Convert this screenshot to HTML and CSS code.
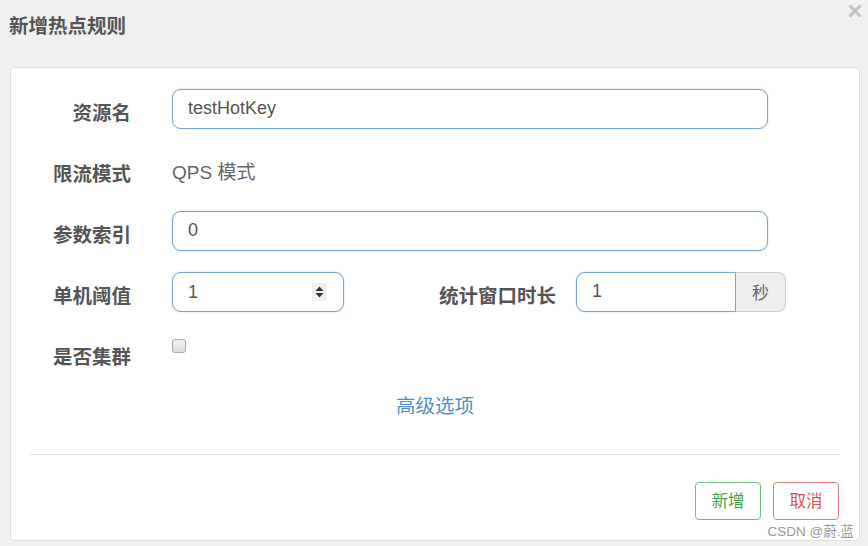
FILE: index.html
```html
<!DOCTYPE html>
<html lang="zh">
<head>
<meta charset="utf-8">
<title>新增热点规则</title>
<link rel="stylesheet" href="styles.css">
</head>
<body>
<div class="dialog">
  <div class="header">
    <div class="title">新增热点规则</div>
    <svg class="close" width="14" height="14" viewBox="0 0 14 14" aria-label="关闭">
      <path d="M1.5 1.5 L12.5 12.5 M12.5 1.5 L1.5 12.5" stroke="#c3c3c3" stroke-width="3" stroke-linecap="butt"/>
    </svg>
  </div>
  <div class="panel">
    <div class="form">
      <div class="row">
        <div class="label">资源名</div>
        <div class="input wide">testHotKey</div>
      </div>
      <div class="row">
        <div class="label">限流模式</div>
        <div class="static">QPS 模式</div>
      </div>
      <div class="row">
        <div class="label">参数索引</div>
        <div class="input wide">0</div>
      </div>
      <div class="row">
        <div class="label">单机阈值</div>
        <div class="input narrow">
          <span>1</span>
          <svg class="spin" width="15" height="18" viewBox="0 0 15 18">
            <rect x="0" y="0" width="15" height="18" fill="#efefef"/>
            <path d="M3.5 8 L7.5 3.5 L11.5 8 Z" fill="#333"/>
            <path d="M3.5 10 L7.5 14.5 L11.5 10 Z" fill="#333"/>
          </svg>
        </div>
        <div class="label label2">统计窗口时长</div>
        <div class="group">
          <div class="input gin">1</div>
          <div class="addon">秒</div>
        </div>
      </div>
      <div class="row">
        <div class="label">是否集群</div>
        <div class="check"></div>
      </div>
    </div>
    <div class="advanced">高级选项</div>
    <div class="rule"></div>
    <div class="buttons">
      <div class="btn ok">新增</div>
      <div class="btn cancel">取消</div>
    </div>
    <div class="mark">CSDN @蔚.蓝</div>
  </div>
</div>
</body>
</html>
```

FILE: styles.css
```css
html, body {
  margin: 0;
  padding: 0;
}
body {
  background: #f0f0f0;
  font-family: "Liberation Sans", "Noto Sans CJK SC", sans-serif;
  color: #555;
  width: 868px;
  height: 546px;
  overflow: hidden;
}
.dialog {
  width: 868px;
}
.header {
  height: 67px;
  display: flex;
  justify-content: space-between;
  align-items: flex-start;
  padding: 0 6px 0 9px;
  box-sizing: border-box;
}
.title {
  margin-top: 13px;
  font-size: 19.5px;
  line-height: 24px;
  font-weight: bold;
  color: #555;
  font-family: "Noto Sans CJK SC", sans-serif;
}
.close {
  display: block;
  margin-top: 4px;
}
.panel {
  position: relative;
  margin-left: 10px;
  width: 850px;
  height: 474px;
  box-sizing: border-box;
  background: #fff;
  border: 1px solid #dddddd;
  border-radius: 5px;
  padding: 21px 20px 20px 0;
}
.form {
  display: flex;
  flex-direction: column;
  gap: 21px;
}
.row {
  display: flex;
  align-items: flex-start;
  height: 40px;
}
.label {
  width: 120px;
  flex: none;
  text-align: right;
  font-family: "Noto Sans CJK SC", sans-serif;
  font-weight: bold;
  font-size: 19.5px;
  line-height: 34px;
  padding-top: 6px;
  color: #555;
  margin-right: 41px;
}
.label2 {
  width: 212px;
  margin-right: 20px;
}
.static {
  font-size: 19px;
  line-height: 34px;
  padding-top: 6px;
  color: #666;
}
.static, .input {
  font-family: "Liberation Sans", "Noto Sans CJK SC", sans-serif;
}
.input {
  box-sizing: border-box;
  height: 40px;
  border: 1.5px solid #7ba3cd;
  border-radius: 9px;
  box-shadow: 0 0 2px rgba(102, 150, 210, 0.45);
  padding: 0 15px;
  font-size: 18px;
  line-height: 37px;
  color: #555;
  background: #fff;
}
.wide {
  width: 596px;
}
.narrow {
  width: 172px;
  display: flex;
  align-items: center;
  justify-content: space-between;
  padding-right: 16px;
}
.spin {
  display: block;
}
.group {
  display: flex;
  width: 210px;
}
.gin {
  width: 160px;
  border-radius: 9px 0 0 9px;
}
.addon {
  box-sizing: border-box;
  width: 50px;
  height: 40px;
  background: #eeeeee;
  border: 1px solid #cccccc;
  border-left: none;
  border-radius: 0 8px 8px 0;
  text-align: center;
  line-height: 38px;
  font-size: 17px;
  color: #666;
  font-family: "Noto Sans CJK SC", sans-serif;
}
.check {
  margin-top: 6px;
  width: 14px;
  height: 14px;
  box-sizing: border-box;
  border: 1px solid #aaaaaa;
  border-radius: 3px;
  background: linear-gradient(#f2f2f2, #dcdcdc);
}
.advanced {
  margin-top: 20px;
  text-align: center;
  padding-left: 20px;
  font-family: "Noto Sans CJK SC", sans-serif;
  font-size: 19.5px;
  line-height: 24px;
  color: #4d90cb;
}
.rule {
  margin: 37px 0 0 19px;
  height: 1px;
  background: #e5e5e5;
}
.buttons {
  margin-top: 27px;
  display: flex;
  justify-content: flex-end;
  gap: 12px;
}
.btn {
  box-sizing: border-box;
  width: 66px;
  height: 38px;
  border-radius: 4px;
  border: 1.5px solid;
  text-align: center;
  font-family: "Noto Sans CJK SC", sans-serif;
  font-size: 16.5px;
  line-height: 35px;
  background: #fff;
}
.ok {
  border-color: #6fbf7a;
  color: #3ea64a;
}
.cancel {
  border-color: #de7e7b;
  color: #d9534f;
}
.mark {
  position: absolute;
  right: 5px;
  bottom: 0px;
  font-family: "Liberation Sans", "Noto Sans CJK SC", sans-serif;
  font-size: 13.5px;
  line-height: 16px;
  color: #9a9a9a;
  text-shadow: 0 0 2px #fff;
}
```
